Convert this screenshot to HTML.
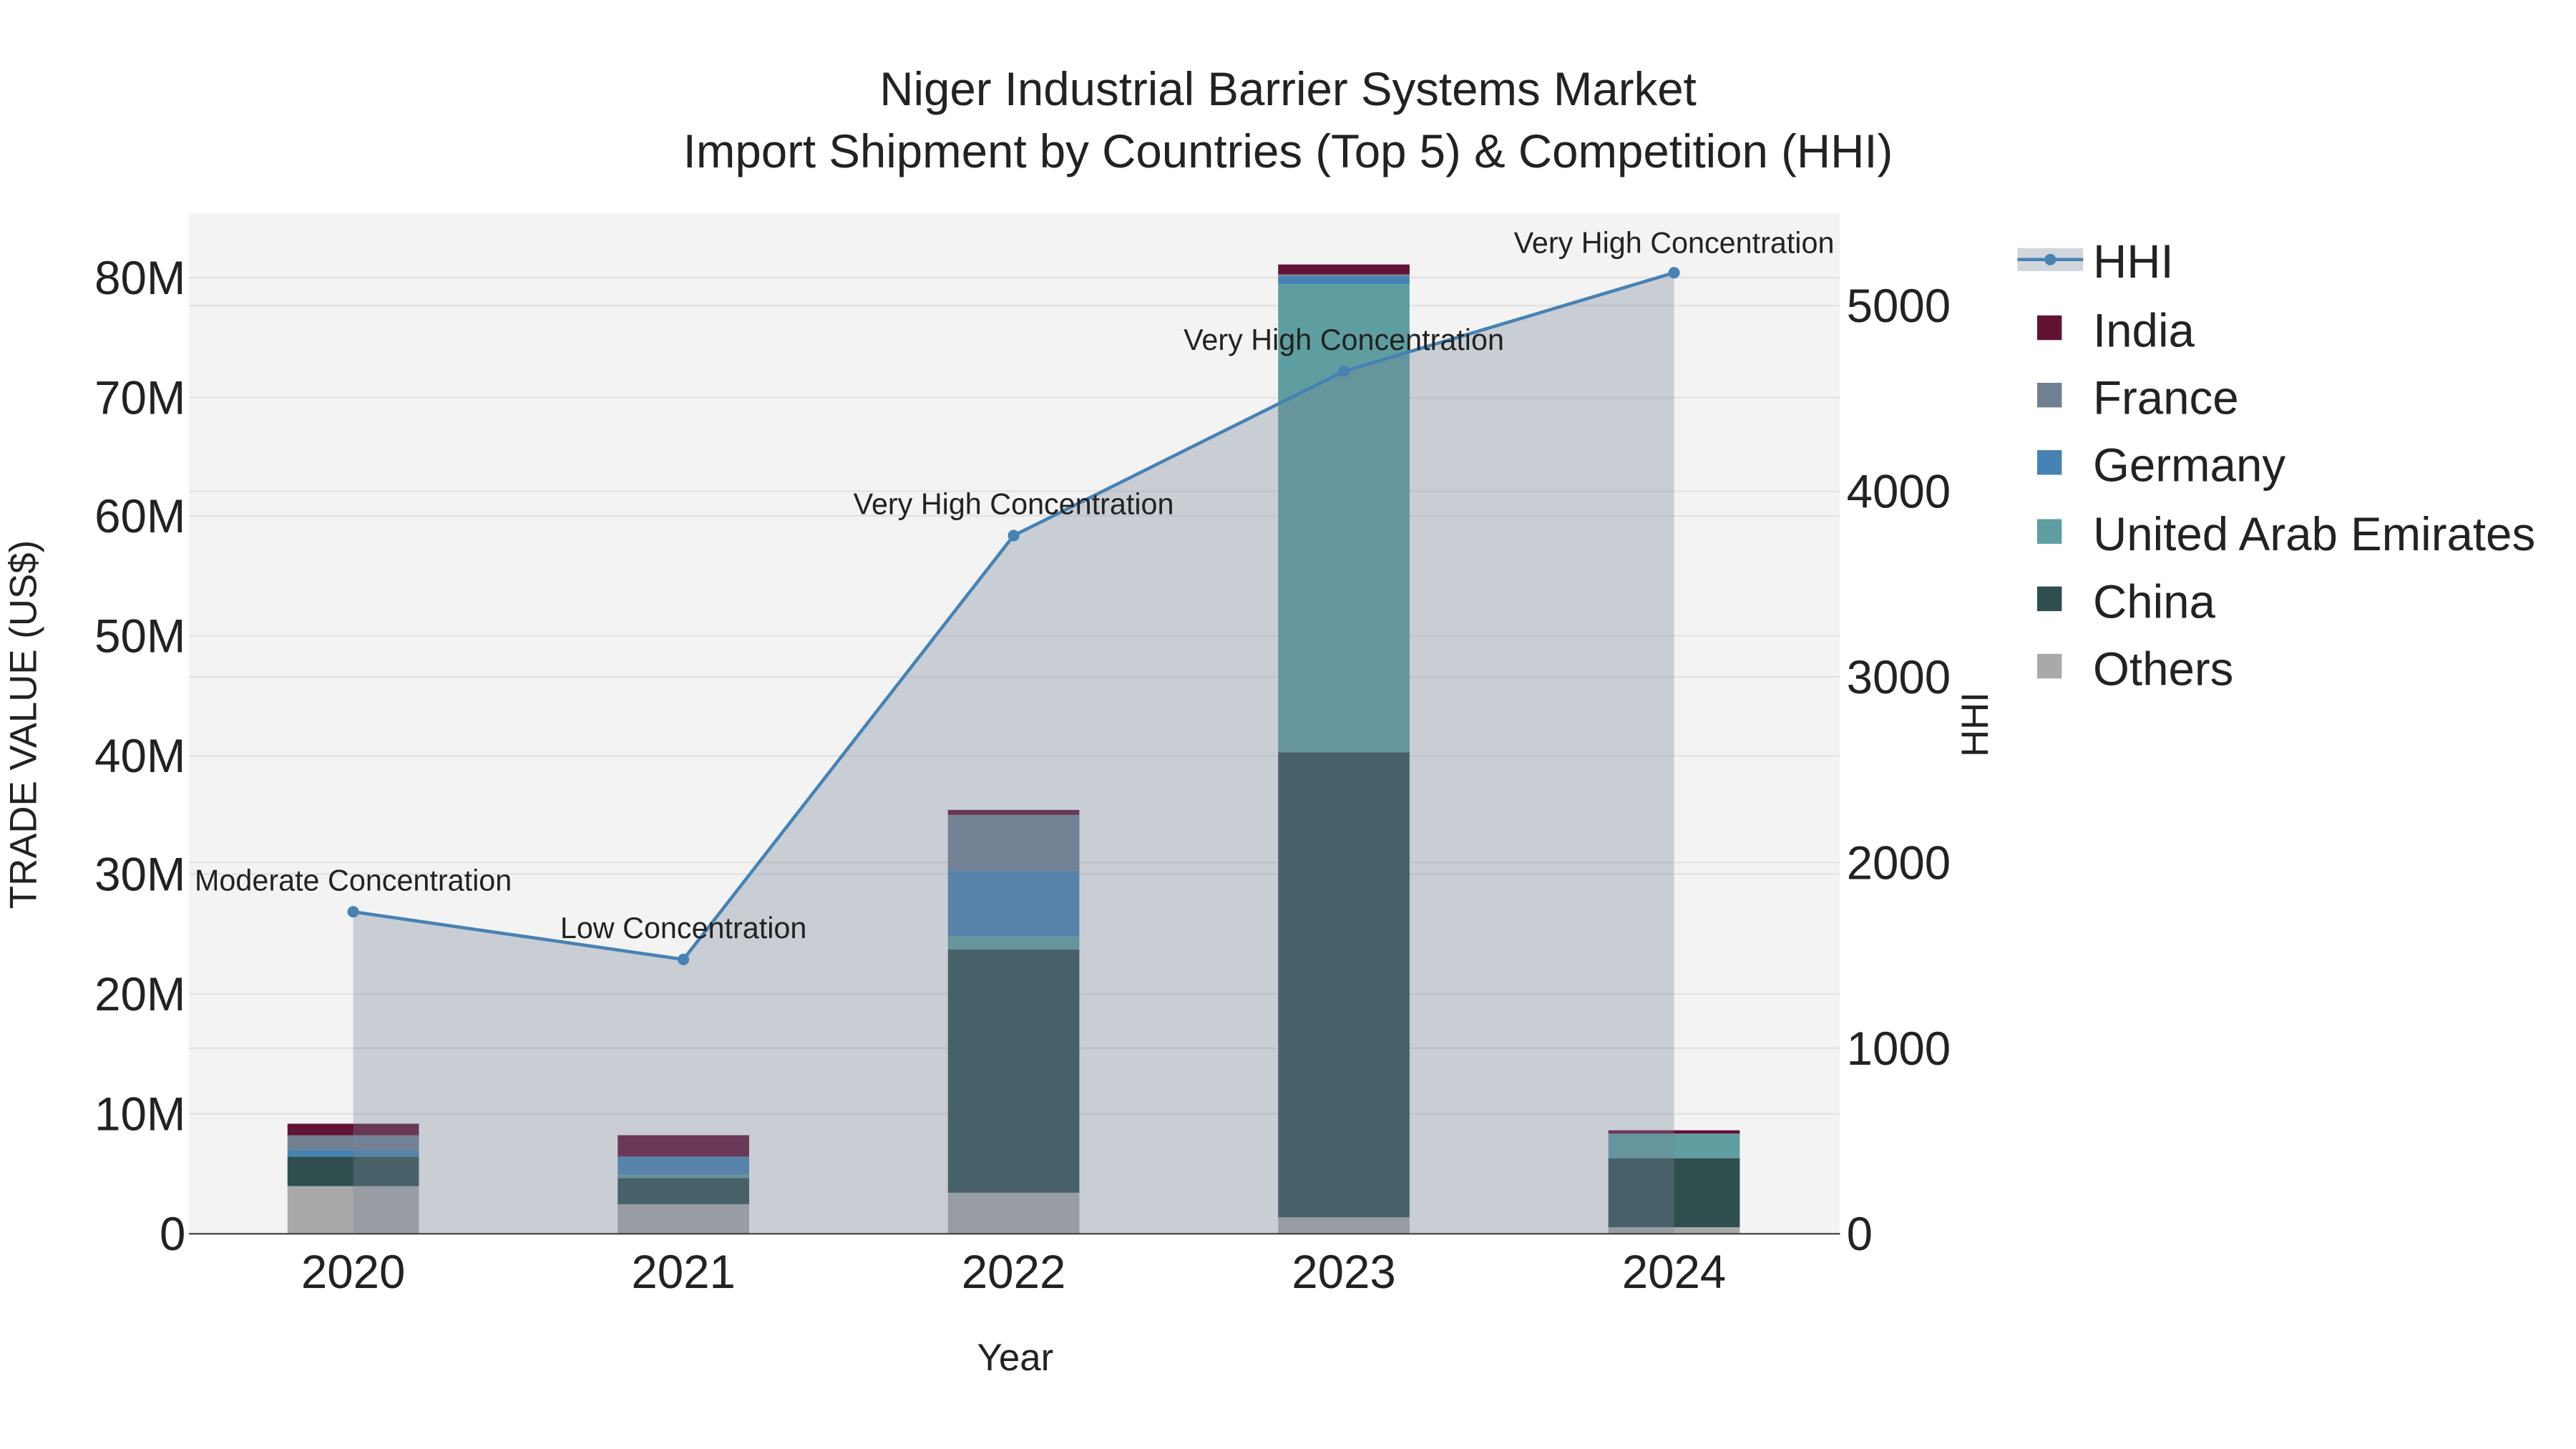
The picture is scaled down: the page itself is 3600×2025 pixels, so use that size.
<!DOCTYPE html>
<html><head><meta charset="utf-8"><style>html,body{margin:0;padding:0;background:#fff}svg{display:block}</style></head>
<body>
<svg width="3600" height="2025" viewBox="0 0 1568 882" xmlns="http://www.w3.org/2000/svg" font-family="Liberation Sans, Arial, sans-serif">
<rect width="1568" height="882" fill="#fff"/>
<rect x="115" y="130" width="1005" height="621" fill="#f3f3f3"/>
<g stroke="#e2e2e2" stroke-width="1">
<line x1="115" x2="1120" y1="678" y2="678"/><line x1="115" x2="1120" y1="605" y2="605"/><line x1="115" x2="1120" y1="532" y2="532"/><line x1="115" x2="1120" y1="460" y2="460"/><line x1="115" x2="1120" y1="387" y2="387"/><line x1="115" x2="1120" y1="314" y2="314"/><line x1="115" x2="1120" y1="242" y2="242"/><line x1="115" x2="1120" y1="169" y2="169"/>
<line x1="115" x2="1120" y1="638" y2="638"/><line x1="115" x2="1120" y1="525" y2="525"/><line x1="115" x2="1120" y1="412" y2="412"/><line x1="115" x2="1120" y1="299" y2="299"/><line x1="115" x2="1120" y1="186" y2="186"/>
</g>
<g>
<rect x="175" y="722" width="80" height="29" fill="#a9a9a9"/>
<rect x="175" y="704" width="80" height="18" fill="#2f4f4f"/>
<rect x="175" y="700" width="80" height="4" fill="#4682b4"/>
<rect x="175" y="691" width="80" height="9" fill="#708090"/>
<rect x="175" y="684" width="80" height="7" fill="#611235"/>

<rect x="376" y="733" width="80" height="18" fill="#a9a9a9"/>
<rect x="376" y="717" width="80" height="16" fill="#2f4f4f"/>
<rect x="376" y="715" width="80" height="2" fill="#5f9ea0"/>
<rect x="376" y="704" width="80" height="11" fill="#4682b4"/>
<rect x="376" y="691" width="80" height="13" fill="#611235"/>

<rect x="577" y="726" width="80" height="25" fill="#a9a9a9"/>
<rect x="577" y="578" width="80" height="148" fill="#2f4f4f"/>
<rect x="577" y="570" width="80" height="8" fill="#5f9ea0"/>
<rect x="577" y="530" width="80" height="40" fill="#4682b4"/>
<rect x="577" y="496" width="80" height="34" fill="#708090"/>
<rect x="577" y="493" width="80" height="3" fill="#611235"/>

<rect x="778" y="741" width="80" height="10" fill="#a9a9a9"/>
<rect x="778" y="458" width="80" height="283" fill="#2f4f4f"/>
<rect x="778" y="173" width="80" height="285" fill="#5f9ea0"/>
<rect x="778" y="168" width="80" height="5" fill="#4682b4"/>
<rect x="778" y="167" width="80" height="1" fill="#708090"/>
<rect x="778" y="161" width="80" height="6" fill="#611235"/>

<rect x="979" y="747" width="80" height="4" fill="#a9a9a9"/>
<rect x="979" y="705" width="80" height="42" fill="#2f4f4f"/>
<rect x="979" y="690" width="80" height="15" fill="#5f9ea0"/>
<rect x="979" y="688" width="80" height="2" fill="#611235"/>
</g>
<path d="M215,751 L215,555 L416,584 L617,326 L818,226 L1019,166 L1019,751 Z" fill="rgb(119,131,151)" fill-opacity="0.34"/>
<polyline points="215,555 416,584 617,326 818,226 1019,166" fill="none" stroke="#4682b4" stroke-width="2"/>
<g fill="#4682b4"><circle cx="215" cy="555" r="3.5"/><circle cx="416" cy="584" r="3.5"/><circle cx="617" cy="326" r="3.5"/><circle cx="818" cy="226" r="3.5"/><circle cx="1019" cy="166" r="3.5"/></g>
<line x1="115" x2="1120" y1="751" y2="751" stroke="#444" stroke-width="1"/>
<g font-size="18" fill="#222" text-anchor="middle">
<text x="215" y="542">Moderate Concentration</text>
<text x="416" y="571">Low Concentration</text>
<text x="617" y="313">Very High Concentration</text>
<text x="818" y="213">Very High Concentration</text>
<text x="1019" y="154">Very High Concentration</text>
</g>
<g font-size="28.5" fill="#222" text-anchor="end">
<text x="113" y="761">0</text><text x="113" y="688">10M</text><text x="113" y="615">20M</text><text x="113" y="542">30M</text><text x="113" y="470">40M</text><text x="113" y="397">50M</text><text x="113" y="324">60M</text><text x="113" y="252">70M</text><text x="113" y="179">80M</text>
</g>
<g font-size="28.5" fill="#222">
<text x="1124" y="761">0</text><text x="1124" y="648">1000</text><text x="1124" y="535">2000</text><text x="1124" y="422">3000</text><text x="1124" y="309">4000</text><text x="1124" y="196">5000</text>
</g>
<g font-size="28.5" fill="#222" text-anchor="middle">
<text x="215" y="784">2020</text><text x="416" y="784">2021</text><text x="617" y="784">2022</text><text x="818" y="784">2023</text><text x="1019" y="784">2024</text>
</g>
<text x="618" y="834" font-size="23" fill="#222" text-anchor="middle">Year</text>
<text transform="translate(22,441) rotate(-90)" font-size="23" fill="#222" text-anchor="middle">TRADE VALUE (US$)</text>
<text transform="translate(1210,441) rotate(-90)" font-size="23" fill="#222" text-anchor="middle">HHI</text>
<text x="784" y="64" font-size="28.5" fill="#222" text-anchor="middle">Niger Industrial Barrier Systems Market</text>
<text x="784" y="102" font-size="28.5" fill="#222" text-anchor="middle">Import Shipment by Countries (Top 5) &amp; Competition (HHI)</text>
<rect x="1228" y="151" width="40" height="14" fill="rgb(119,131,151)" fill-opacity="0.34"/>
<line x1="1228" x2="1268" y1="158" y2="158" stroke="#4682b4" stroke-width="2"/>
<circle cx="1248" cy="158" r="3.5" fill="#4682b4"/>
<rect x="1240" y="192" width="15" height="15" fill="#611235"/>
<rect x="1240" y="233" width="15" height="15" fill="#708090"/>
<rect x="1240" y="274" width="15" height="15" fill="#4682b4"/>
<rect x="1240" y="316" width="15" height="15" fill="#5f9ea0"/>
<rect x="1240" y="357" width="15" height="15" fill="#2f4f4f"/>
<rect x="1240" y="398" width="15" height="15" fill="#a9a9a9"/>
<g font-size="28.5" fill="#222">
<text x="1274" y="169">HHI</text><text x="1274" y="211">India</text><text x="1274" y="252">France</text><text x="1274" y="293">Germany</text><text x="1274" y="335">United Arab Emirates</text><text x="1274" y="376">China</text><text x="1274" y="417">Others</text>
</g>
</svg>
</body></html>
